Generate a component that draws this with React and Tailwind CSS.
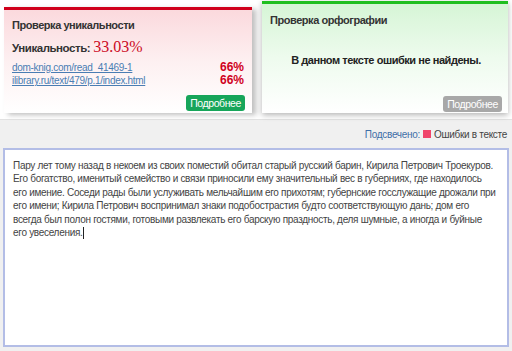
import React from 'react';

const text = [
  'Пару лет тому назад в некоем из своих поместий обитал старый русский барин, Кирила Петрович Троекуров.',
  'Его богатство, именитый семейство и связи приносили ему значительный вес в губерниях, где находилось',
  'его имение. Соседи рады были услуживать мельчайшим его прихотям; губернские госслужащие дрожали при',
  'его имени; Кирила Петрович воспринимал знаки подобострастия будто соответствующую дань; дом его',
  'всегда был полон гостями, готовыми развлекать его барскую праздность, деля шумные, а иногда и буйные',
  'его увеселения.',
];

function App() {
  return (
    <div className="w-[512px] h-[351px] overflow-hidden bg-[#f0f0f0] text-[10px] tracking-[-0.3px] text-[#333]" style={{ fontFamily: '"Liberation Sans", Arial, sans-serif' }}>
      {/* result cards */}
      <div className="h-[120px] bg-white flex gap-[10px] pl-[4px] pr-[4px] border-b border-[#e2e2e2]">
        <div className="mt-[7px] w-[248px] h-[106px] flex flex-col border-t-[3px] border-[#d0001c] bg-gradient-to-b from-[#fbd9dd] via-[#fdf0f1] to-white shadow-[4px_2px_5px_rgba(0,0,0,0.25)] pl-[8px] pr-[7px]">
          <div className="mt-[9px] leading-[13px] font-bold text-[11px] tracking-[-0.45px] text-[#333]">Проверка уникальности</div>
          <div className="mt-[5px] h-[20px] flex items-baseline gap-[3px] leading-[20px]">
            <span className="font-bold text-[11.5px] tracking-[-0.45px]">Уникальность:</span>
            <span className="text-[16px] tracking-normal text-[#cc0a24]" style={{ fontFamily: '"Liberation Serif", serif' }}>33.03%</span>
          </div>
          <div className="mt-[4px] flex justify-between leading-[13px]">
            <span className="text-[#4a7db3] underline">dom-knig.com/read_41469-1</span>
            <span className="font-bold text-[#d0001c] text-[12px] tracking-normal pr-[1px]">66%</span>
          </div>
          <div className="flex justify-between leading-[13px]">
            <span className="text-[#4a7db3] underline">ilibrary.ru/text/479/p.1/index.html</span>
            <span className="font-bold text-[#d0001c] text-[12px] tracking-normal pr-[1px]">66%</span>
          </div>
          <div className="mt-[8px] flex justify-end">
            <span className="rounded-[3px] bg-[#17a55a] text-white text-[10.5px] tracking-[-0.4px] px-[4px] h-[16px] leading-[16px]">Подробнее</span>
          </div>
        </div>
        <div className="mt-[1px] w-[246px] h-[112px] flex flex-col border-t-[3px] border-[#1fbf1f] bg-gradient-to-b from-[#d6f5d6] via-[#eefbee] to-white shadow-[0_2px_6px_rgba(0,0,0,0.3)] pl-[8px] pr-[6px]">
          <div className="mt-[10px] leading-[13px] font-bold text-[11px] tracking-[-0.45px] text-[#333]">Проверка орфографии</div>
          <div className="mt-[27px] leading-[13px] text-center font-bold text-[11px] tracking-[-0.45px] text-[#222]">В данном тексте ошибки не найдены.</div>
          <div className="mt-auto mb-[1px] flex justify-end">
            <span className="rounded-[3px] bg-[#a8a8a8] text-white text-[10.5px] tracking-[-0.4px] px-[4px] h-[16px] leading-[16px]">Подробнее</span>
          </div>
        </div>
      </div>

      {/* legend */}
      <div className="h-[28px] flex items-center justify-end gap-[3px] pr-[5px]">
        <span className="text-[#3f6fa8]">Подсвечено:</span>
        <span className="w-[8px] h-[8px] bg-[#f0456b] inline-block"></span>
        <span className="text-[#444]">Ошибки в тексте</span>
      </div>

      {/* text area */}
      <div className="mx-[3px] h-[199px] bg-white border-2 border-[#b3bde6] px-[8px] pt-[9px] text-[#444] leading-[13.4px]">
        {text.map((line, i) => (
          <div key={i} className="whitespace-nowrap">
            {line}
            {i === text.length - 1 && <span className="inline-block w-px h-[12px] bg-[#222] align-middle"></span>}
          </div>
        ))}
      </div>
    </div>
  );
}

export default App;
